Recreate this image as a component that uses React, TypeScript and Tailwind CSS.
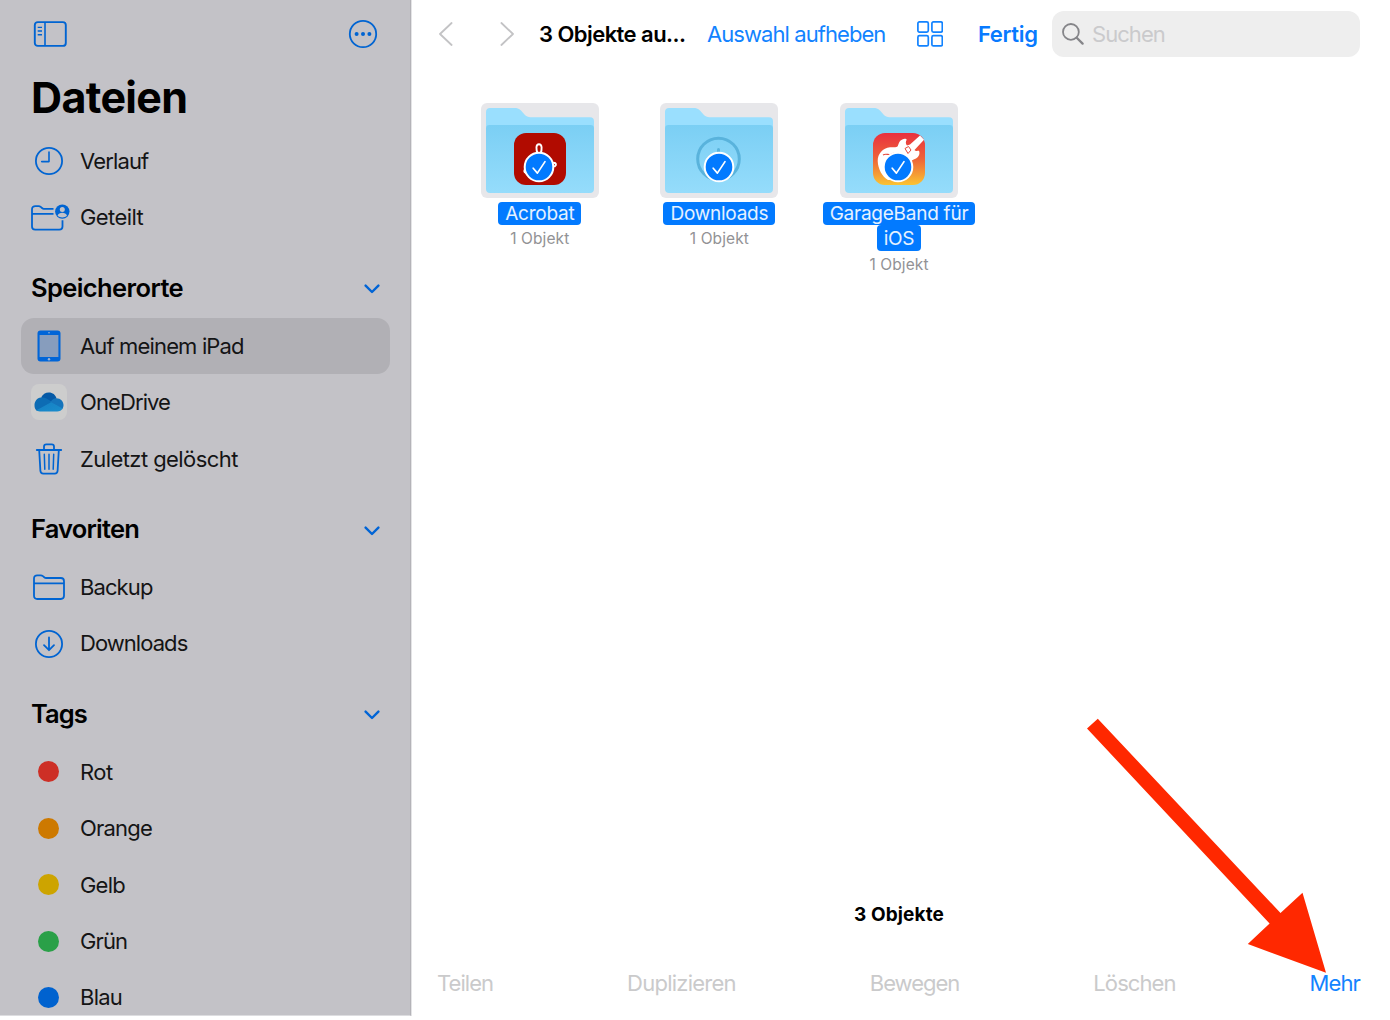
import type { ReactNode } from 'react';
import clsx from 'clsx';

const tags = [
  { name: 'Rot', color: 'bg-[#cd2f26]', tracking: 'tracking-[-0.5px]' },
  { name: 'Orange', color: 'bg-[#cd7900]', tracking: 'tracking-[-0.8px]' },
  { name: 'Gelb', color: 'bg-[#cda400]', tracking: 'tracking-[-0.8px]' },
  { name: 'Grün', color: 'bg-[#2aa048]', tracking: 'tracking-[-0.9px]' },
  { name: 'Blau', color: 'bg-[#0062cf]', tracking: 'tracking-[-0.75px]' },
];

function SidebarIcon() {
  return (
    <svg width="34" height="26" viewBox="0 0 34 26" fill="none" stroke="currentColor" strokeWidth="1.9">
      <rect x="1.8" y="1.1" width="31" height="23.8" rx="3" />
      <path d="M12 1v24" strokeWidth="1.6" />
      <path d="M4.7 6.4H9M4.7 10H9M4.7 13.7H9" strokeWidth="1.4" />
    </svg>
  );
}

function MoreIcon() {
  return (
    <svg width="30" height="30" viewBox="0 0 30 30" fill="none">
      <circle cx="15" cy="15" r="13.2" stroke="currentColor" strokeWidth="1.8" />
      <g fill="currentColor">
        <circle cx="8.6" cy="15" r="2" />
        <circle cx="15" cy="15" r="2" />
        <circle cx="21.4" cy="15" r="2" />
      </g>
    </svg>
  );
}

function ClockIcon() {
  return (
    <svg width="30" height="30" viewBox="0 0 30 30" fill="none" stroke="currentColor" strokeWidth="1.8" strokeLinecap="round" strokeLinejoin="round">
      <circle cx="15" cy="15" r="13.1" />
      <path d="M15 6v9.6H7.7" strokeWidth="1.6" />
    </svg>
  );
}

function SharedFolderIcon() {
  return (
    <svg width="40" height="28" viewBox="0 0 40 28" fill="none" className="ml-[3px]">
      <path
        d="M23.5 4.8H13.8c-.8 0-1.2-.3-1.8-.8l-1.3-1.1c-.6-.5-1-.8-2-.8H5.4C3.4 2.100 2 3.300 2 5.300v17.200c0 2 1.200 3.200 3.200 3.200h24.100c2 0 3.200-1.200 3.200-3.200v-6.200M2 9.900h21.500"
        stroke="currentColor"
        strokeWidth="1.8"
      />
      <circle cx="32.3" cy="7.6" r="7.2" fill="currentColor" />
      <circle cx="32.3" cy="5.6" r="2.5" fill="#c3c2c7" />
      <path d="M27.6 11.8c.7-2.2 2.6-3 4.7-3s4 .8 4.700 3c-1.300 1.200-2.900 1.700-4.700 1.700s-3.400-.5-4.700-1.700z" fill="#c3c2c7" />
    </svg>
  );
}

function IpadIcon() {
  return (
    <svg width="24" height="32" viewBox="0 0 24 32">
      <rect x=".5" y=".5" width="23" height="31" rx="3" fill="#0065d8" />
      <rect x="2.6" y="5" width="18.8" height="22" fill="#879dbd" />
      <circle cx="12" cy="2.8" r=".8" fill="#9cb4d6" />
      <circle cx="12" cy="29.2" r="1.2" fill="#9cb4d6" />
    </svg>
  );
}

function OneDriveIcon() {
  return (
    <span className="flex size-9 items-center justify-center rounded-lg bg-[#cdcdcd]">
      <svg width="30" height="20" viewBox="0 0 30 20">
        <defs>
          <linearGradient id="cloudBase" x1="0" y1="0" x2="1" y2="1">
            <stop offset="0" stopColor="#1580c4" />
            <stop offset="1" stopColor="#1a8dcc" />
          </linearGradient>
        </defs>
        <path d="M7.1 5.6C8.6 2.2 11.5.4 14.8.4c4 0 6.6 2.3 7.7 5.9l-6 4.2z" fill="#0559a6" />
        <path d="M6.9 5.6c2-.5 4 0 5.6 1l8.3 5L3 19C1.2 17.600.5 15.800.5 13.300c0-4 2.600-7.200 6.400-7.700z" fill="#0d6cb4" />
        <path d="M17 9.2c1.500-1.900 3.300-3.100 5.500-3 4 .1 7 3 7 6.900 0 1.700-.5 3-1.300 4.100L15.500 9.900z" fill="#1574bb" />
        <path d="M2.500 18.200l14.600-8 11.600 6.400c-1.200 2-3.200 3-5.500 3H7.300c-2 0-3.600-.3-4.800-1.400z" fill="url(#cloudBase)" />
      </svg>
    </span>
  );
}

function TrashIcon() {
  return (
    <svg width="28" height="32" viewBox="0 0 28 32" fill="none" stroke="currentColor" strokeWidth="1.8" strokeLinecap="round" strokeLinejoin="round">
      <path d="M1.8 7h24.400M9 6.700V3.600c0-1.500.8-2.300 2.300-2.300h5.400c1.500 0 2.300.8 2.300 2.300v3.100M4.200 7.200l1.200 20.600c.1 1.700 1.200 2.800 2.900 2.800h11.400c1.700 0 2.800-1.100 2.900-2.800l1.200-20.600" />
      <path d="M9.3 11.3l.5 15M14 11.3v15M18.7 11.3l-.5 15" strokeWidth="1.5" />
    </svg>
  );
}

function FolderOutlineIcon() {
  return (
    <svg width="34" height="28" viewBox="0 0 34 28" fill="none" stroke="currentColor" strokeWidth="1.8">
      <path d="M2 5.6C2 3.6 3.2 2.3 5.2 2.300h3.600c1 0 1.500.3 2.100.8l1.300 1.100c.6.500 1.100.8 1.900.8h14.700c2 0 3.200 1.200 3.200 3.200v14.600c0 2-1.200 3.200-3.200 3.200H5.200c-2 0-3.200-1.200-3.200-3.200zM2 10.300h30" />
    </svg>
  );
}

function DownloadIcon() {
  return (
    <svg width="30" height="30" viewBox="0 0 30 30" fill="none" stroke="currentColor" strokeWidth="1.8" strokeLinecap="round" strokeLinejoin="round">
      <circle cx="15" cy="15" r="13.1" />
      <path d="M15 8.5v12.3M10 16.2l5 5 5-5" />
    </svg>
  );
}

function ChevronDown() {
  return (
    <svg width="16" height="10" viewBox="0 0 16 10" fill="none" stroke="#0064d6" strokeWidth="2.4" strokeLinecap="round" strokeLinejoin="round" className="mt-[2px]">
      <path d="M1.6 1.6L8 8l6.4-6.4" />
    </svg>
  );
}

interface SidebarItemProps {
  icon: ReactNode;
  label: string;
  tracking: string;
  active?: boolean;
}

function SidebarItem({ icon, label, tracking, active }: SidebarItemProps) {
  return (
    <li
      className={clsx(
        'flex h-[56.45px] items-center rounded-[13px]',
        active && 'bg-[#b1b0b5]'
      )}
    >
      <span className="flex w-[55px] shrink-0 justify-center text-[#0064d2]">{icon}</span>
      <span className={clsx('ml-1 pt-[0.4px] text-[22px] whitespace-nowrap text-[#141415]', tracking)}>{label}</span>
    </li>
  );
}

function SectionHeader({ title, tracking }: { title: string; tracking: string }) {
  return (
    <div className="flex h-[71.9px] items-center justify-between pt-[13px] pr-[10px] pl-[10px]">
      <h2 className={clsx('text-[25.5px] font-semibold text-black', tracking)}>{title}</h2>
      <ChevronDown />
    </div>
  );
}

function Sidebar() {
  return (
    <aside className="h-[1016px] w-[411px] shrink-0 overflow-hidden border-r border-b border-r-[#b4b3b8] border-b-[#dddde0] bg-[#c3c2c7] pr-5 pl-[21px]">
      <div className="flex h-[68px] items-center justify-between pr-3 pl-3 text-[#0064d2]">
        <SidebarIcon />
        <MoreIcon />
      </div>
      <h1 className="h-[65px] pl-[10px] text-[43px] leading-[58px] font-bold tracking-[-0.65px] text-black">Dateien</h1>
      <ul>
        <SidebarItem icon={<ClockIcon />} label="Verlauf" tracking="tracking-[-0.85px]" />
        <SidebarItem icon={<SharedFolderIcon />} label="Geteilt" tracking="tracking-[-0.6px]" />
      </ul>
      <SectionHeader title="Speicherorte" tracking="tracking-[-0.6px]" />
      <ul>
        <SidebarItem icon={<IpadIcon />} label="Auf meinem iPad" tracking="tracking-[-0.85px]" active />
        <SidebarItem icon={<OneDriveIcon />} label="OneDrive" tracking="tracking-[-0.9px]" />
        <SidebarItem icon={<TrashIcon />} label="Zuletzt gelöscht" tracking="tracking-[-0.57px]" />
      </ul>
      <SectionHeader title="Favoriten" tracking="tracking-[-0.8px]" />
      <ul>
        <SidebarItem icon={<FolderOutlineIcon />} label="Backup" tracking="tracking-[-0.9px]" />
        <SidebarItem icon={<DownloadIcon />} label="Downloads" tracking="tracking-[-0.95px]" />
      </ul>
      <SectionHeader title="Tags" tracking="tracking-[-0.9px]" />
      <ul>
        {tags.map((tag) => (
          <SidebarItem
            key={tag.name}
            icon={<span className={clsx('size-[21px] rounded-full', tag.color)} />}
            label={tag.name}
            tracking={tag.tracking}
          />
        ))}
      </ul>
    </aside>
  );
}

function Toolbar() {
  return (
    <header className="flex h-[68px] items-center text-[22px] whitespace-nowrap">
      <svg width="14" height="24" viewBox="0 0 14 24" fill="none" stroke="#c3c3c5" strokeWidth="1.8" strokeLinecap="round" strokeLinejoin="round" className="ml-[27px]">
        <path d="M12.6 1L1 12l11.600 11" />
      </svg>
      <svg width="14" height="24" viewBox="0 0 14 24" fill="none" stroke="#c3c3c5" strokeWidth="1.8" strokeLinecap="round" strokeLinejoin="round" className="ml-[47px]">
        <path d="M1.4 1L13 12 1.4 23" />
      </svg>
      <h2 className="ml-[25px] w-[168px] font-semibold tracking-[-0.55px] text-black">3 Objekte au...</h2>
      <button className="w-[210px] text-left tracking-[-0.93px] text-[#1283ff]">Auswahl aufheben</button>
      <svg width="26" height="26" viewBox="0 0 26 26" fill="none" stroke="#1283ff" strokeWidth="1.7">
        <rect x=".9" y=".9" width="10.4" height="10.2" rx="1.5" />
        <rect x="14.9" y=".9" width="10.4" height="10.2" rx="1.5" />
        <rect x=".9" y="14.7" width="10.4" height="10.2" rx="1.5" />
        <rect x="14.9" y="14.7" width="10.4" height="10.2" rx="1.5" />
      </svg>
      <button className="ml-[35px] w-[74px] text-left font-semibold tracking-[-0.35px] text-[#087aff]">Fertig</button>
      <div className="flex h-[46px] w-[308px] items-center rounded-[12px] bg-[#eeeeee] pl-[10px]">
        <svg width="22" height="22" viewBox="0 0 22 22" fill="none" stroke="#858589" strokeLinecap="round">
          <circle cx="8.9" cy="8.9" r="7.9" strokeWidth="1.8" />
          <path d="M14.7 14.7l5.900 5.900" strokeWidth="2.3" />
        </svg>
        <span className="ml-2 tracking-[-0.95px] text-[#cacacc]">Suchen</span>
      </div>
    </header>
  );
}

function CheckBadge() {
  return (
    <svg width="32" height="32" viewBox="0 0 32 32" fill="none" className="absolute top-[48px] left-[42.5px]">
      <circle cx="16" cy="16" r="14.3" fill="#027aff" stroke="#fff" strokeWidth="2" />
      <path d="M10.2 17.2l4.2 4.9 7.6-11.5" stroke="#fff" strokeWidth="1.7" strokeLinecap="round" strokeLinejoin="round" />
    </svg>
  );
}

function AcrobatArt() {
  return (
    <g>
      <rect x="33" y="30" width="52" height="52" rx="12" fill="#b10b00" />
      <path d="M56.8 51c-2-5-2-9.800 1.200-9.800s3.200 4.800 1.500 9.800" fill="none" stroke="#fff" strokeWidth="1.9" />
      <path d="M44.500 66c-1.700 1.200-1.500 3.300.3 3.900M72.800 59.700c2.400 0 2.800 2 1 3.600" fill="none" stroke="#fff" strokeWidth="2" strokeLinecap="round" />
    </g>
  );
}

function DownloadsArt() {
  return (
    <g fill="none" stroke="#59b3dc">
      <circle cx="58.5" cy="56" r="20.8" strokeWidth="3" />
      <path d="M58.5 46.5v14" strokeWidth="3" strokeLinecap="round" />
    </g>
  );
}

function GarageBandArt() {
  return (
    <g>
      <defs>
        <linearGradient id="garage" x1="0" y1="0" x2="0" y2="1">
          <stop offset="0" stopColor="#e9303f" />
          <stop offset=".5" stopColor="#ee6438" />
          <stop offset="1" stopColor="#fbc332" />
        </linearGradient>
      </defs>
      <rect x="33" y="30" width="52" height="52" rx="12" fill="url(#garage)" />
      <path
        d="M80 32.500l4 4.300L74.500 47c1.200 1.500 3 .8 4.500.8 1.200 2.800 0 6.200-3 7.800-2.500 1.200-4.500 1.400-5.500 3.400L64 77H48c-6-3.500-10-11-10.300-19 0-7.500 5-12.800 12.300-13.800 3 0 6.500.8 7.800-1.200 1-3 1.700-5.700 4.500-6.600 2-.9 4-.7 4.400.3-1.200 2-1.200 4 .3 5.800l3-1z"
        fill="#fff"
      />
      <path d="M65 45.500l3.500-2 2.500 3.500-3 3.500z" fill="none" stroke="#e5493c" strokeWidth="1" />
      <path d="M43 52c3-2 5.500.5 8-.8 2-1.200 3.500-1 5-.4" fill="none" stroke="#e5493c" strokeWidth="1.1" />
    </g>
  );
}

interface FolderProps {
  art: ReactNode;
  gradient: string;
  lines: string[];
}

function Folder({ art, gradient, lines }: FolderProps) {
  return (
    <div className="flex w-[179.6px] flex-col items-center">
      <div className="relative h-[95px] w-[118px] rounded-[6px] bg-[#e7e7ea]">
        <svg width="118" height="95" viewBox="0 0 118 95">
          <defs>
            <linearGradient id={gradient} x1="0" y1="0" x2="0" y2="1">
              <stop offset="0" stopColor="#7bcff4" />
              <stop offset="1" stopColor="#95dcfb" />
            </linearGradient>
          </defs>
          <path d="M5 30V9c0-2.500 1.500-4 4-4h24c3 0 5 .6 7 2.600l3.500 4c1.800 2 3.500 2.600 6 2.600H109c2.700 0 4 1.500 4 4v12z" fill="#9adffe" />
          <path d="M5 25.500c0-2.500 1.200-3.500 3.500-3.500h101c2.300 0 3.500 1 3.500 3.500V86c0 2.700-1.500 4-4 4H9c-2.500 0-4-1.300-4-4z" fill={`url(#${gradient})`} />
          {art}
        </svg>
        <CheckBadge />
      </div>
      <div className="mt-[4px] flex flex-col items-center">
        {lines.map((line, i) => (
          <span
            key={line}
            className={clsx(
              'rounded-[4px] bg-[#027aff] px-[7px] text-[19px] tracking-[-0.25px] whitespace-nowrap text-white/90',
              i === 0 ? 'h-[23px] leading-[24px]' : 'h-[26px] leading-[28px]'
            )}
          >
            {line}
          </span>
        ))}
      </div>
      <span className="mt-[2px] text-[15.5px] leading-[23px] tracking-[0.1px] text-[#929295]">1 Objekt</span>
    </div>
  );
}

function BottomBar() {
  return (
    <footer className="flex h-[64px] items-center justify-between pr-[30px] pb-[2px] pl-[25px] text-[22px] text-[#cacacb]">
      <span className="tracking-[-0.95px]">Teilen</span>
      <span className="tracking-[-0.75px]">Duplizieren</span>
      <span className="tracking-[-1px]">Bewegen</span>
      <span className="tracking-[-0.9px]">Löschen</span>
      <span className="tracking-[-0.9px] text-[#1283ff]">Mehr</span>
    </footer>
  );
}

function App() {
  return (
    <div className="relative flex h-[1020px] w-[1390px] overflow-hidden bg-white font-['Inter',sans-serif]">
      <Sidebar />
      <main className="flex h-[1016px] flex-1 flex-col border-l border-[#e4e4e6]">
        <Toolbar />
        <section className="flex flex-1 items-start pt-[35px] pl-[38px]">
          <Folder art={<AcrobatArt />} gradient="folderA" lines={['Acrobat']} />
          <Folder art={<DownloadsArt />} gradient="folderB" lines={['Downloads']} />
          <Folder art={<GarageBandArt />} gradient="folderC" lines={['GarageBand für', 'iOS']} />
        </section>
        <p className="mb-[23px] pr-[4px] text-center text-[19px] font-bold tracking-[0.1px] text-black">3 Objekte</p>
        <BottomBar />
      </main>
      {/* Arrow pointing at the "Mehr" action */}
      <svg width="242" height="256" viewBox="0 0 242 256" className="pointer-events-none absolute top-[718px] left-[1086px]">
        <path d="M11.8.7L194.500 195l22-20.200 23.500 80L161.800 226l21.800-20.500L1 10.500z" fill="#ff2800" />
      </svg>
    </div>
  );
}

export default App;
